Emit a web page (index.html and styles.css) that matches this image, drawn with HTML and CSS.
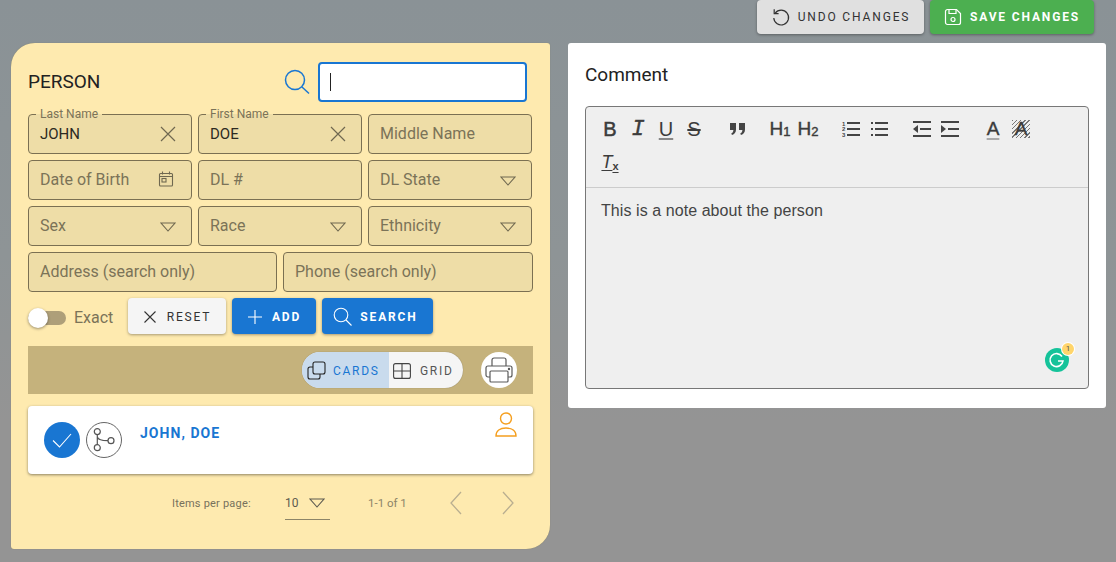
FILE: index.html
```html
<!DOCTYPE html>
<html lang="en">
<head>
    <meta charset="UTF-8">
    <meta name="viewport" content="width=device-width, initial-scale=1.0">
    <title>Person</title>
    <link rel="stylesheet" href="styles.css">
</head>
<body>
    <div class="topbar">
        <button class="btn btn-undo">
            <svg width="20" height="20" viewBox="0 0 20 20" fill="none" stroke="#333" stroke-width="1.2"><path d="M4.2 6.2A7.4 7.4 0 1 1 2.8 11"/><path d="M3.2 2.2v4.4h4.4"/></svg>
            UNDO CHANGES
        </button>
        <button class="btn btn-save">
            <svg width="18" height="18" viewBox="0 0 18 18" fill="none" stroke="#fff" stroke-width="1.2"><path d="M3.5 1.5h9l4 4v9a2 2 0 0 1-2 2h-11a2 2 0 0 1-2-2v-11a2 2 0 0 1 2-2z"/><path d="M5 1.5v4h7v-4"/><circle cx="9" cy="11.5" r="2"/></svg>
            SAVE CHANGES
        </button>
    </div>

    <div class="main">
        <div class="person">
            <div class="person-head">
                <h1>PERSON</h1>
                <svg class="head-search" width="26" height="26" viewBox="0 0 26 26" fill="none" stroke="#1976d2" stroke-width="1.5"><circle cx="11" cy="11" r="9.5"/><path d="M18 18l7 6.5"/></svg>
                <div class="head-input"><span class="caret"></span></div>
            </div>

            <div class="fields">
                <div class="field filled">
                    <span class="float-label">Last Name</span>
                    <span class="value">JOHN</span>
                    <svg class="field-icon" width="16" height="16" viewBox="0 0 16 16" fill="none" stroke="#6f6850" stroke-width="1.2"><path d="M1 1l14 14M15 1L1 15"/></svg>
                </div>
                <div class="field filled">
                    <span class="float-label">First Name</span>
                    <span class="value">DOE</span>
                    <svg class="field-icon" width="16" height="16" viewBox="0 0 16 16" fill="none" stroke="#6f6850" stroke-width="1.2"><path d="M1 1l14 14M15 1L1 15"/></svg>
                </div>
                <div class="field"><span class="hint">Middle Name</span></div>

                <div class="field">
                    <span class="hint">Date of Birth</span>
                    <svg class="field-icon icon-date" width="16" height="16" viewBox="0 0 16 16" fill="none" stroke="#6f6850" stroke-width="1.1"><rect x="1.5" y="2.5" width="13" height="12.5" rx="1"/><path d="M1.5 5.5h13M4.5 .5v3M11.500 .5v3"/><rect x="4" y="7.500" width="4" height="3.500"/></svg>
                </div>
                <div class="field"><span class="hint">DL #</span></div>
                <div class="field">
                    <span class="hint">DL State</span>
                    <svg class="field-icon caret-icon" width="16" height="10" viewBox="0 0 16 10" fill="none" stroke="#6f6850" stroke-width="1.1"><path d="M1 1h14L8 9z"/></svg>
                </div>

                <div class="field">
                    <span class="hint">Sex</span>
                    <svg class="field-icon caret-icon" width="16" height="10" viewBox="0 0 16 10" fill="none" stroke="#6f6850" stroke-width="1.1"><path d="M1 1h14L8 9z"/></svg>
                </div>
                <div class="field">
                    <span class="hint">Race</span>
                    <svg class="field-icon caret-icon" width="16" height="10" viewBox="0 0 16 10" fill="none" stroke="#6f6850" stroke-width="1.1"><path d="M1 1h14L8 9z"/></svg>
                </div>
                <div class="field">
                    <span class="hint">Ethnicity</span>
                    <svg class="field-icon caret-icon" width="16" height="10" viewBox="0 0 16 10" fill="none" stroke="#6f6850" stroke-width="1.1"><path d="M1 1h14L8 9z"/></svg>
                </div>
            </div>

            <div class="fields-two">
                <div class="field"><span class="hint">Address (search only)</span></div>
                <div class="field"><span class="hint">Phone (search only)</span></div>
            </div>

            <div class="actions">
                <div class="switch"><span class="knob"></span></div>
                <span class="exact">Exact</span>
                <button class="btn btn-reset">
                    <svg width="14" height="14" viewBox="0 0 14 14" fill="none" stroke="#333" stroke-width="1.1"><path d="M1.500 1.500l11 11M12.500 1.500l-11 11"/></svg>
                    RESET
                </button>
                <button class="btn btn-blue btn-add">
                    <svg width="16" height="16" viewBox="0 0 16 16" fill="none" stroke="#fff" stroke-width="1.1"><path d="M8 1v14M1 8h14"/></svg>
                    ADD
                </button>
                <button class="btn btn-blue btn-search">
                    <svg width="19" height="19" viewBox="0 0 19 19" fill="none" stroke="#fff" stroke-width="1.1"><circle cx="8" cy="8" r="6.800"/><path d="M13 13l5.500 5.500"/></svg>
                    SEARCH
                </button>
            </div>

            <div class="band">
                <div class="view-toggle">
                    <div class="view-opt view-on">
                        <svg width="19" height="19" viewBox="0 0 19 19" fill="none" stroke="#222" stroke-width="1.1"><rect x="6" y="1" width="12" height="12" rx="2"/><path d="M6 6H3a2 2 0 0 0-2 2v8a2 2 0 0 0 2 2h8a2 2 0 0 0 2-2v-3"/></svg>
                        CARDS
                    </div>
                    <div class="view-opt">
                        <svg width="18" height="16" viewBox="0 0 18 16" fill="none" stroke="#444" stroke-width="1.1"><rect x=".6" y=".6" width="16.800" height="14.800" rx="2"/><path d="M9 .6v14.800M.6 8h16.800"/></svg>
                        GRID
                    </div>
                </div>
                <div class="print">
                    <svg width="28" height="26" viewBox="0 0 28 26" fill="none" stroke="#5a5a5a" stroke-width="1.2"><path d="M7 9V3a2 2 0 0 1 2-2h10a2 2 0 0 1 2 2v6"/><path d="M5 20H3a2 2 0 0 1-2-2v-7a2 2 0 0 1 2-2h22a2 2 0 0 1 2 2v7a2 2 0 0 1-2 2h-2"/><rect x="5" y="14" width="18" height="11" rx="1"/><circle cx="24" cy="12" r=".6"/></svg>
                </div>
            </div>

            <div class="card">
                <div class="round round-check">
                    <svg width="20" height="15" viewBox="0 0 20 15" fill="none" stroke="#fff" stroke-width="1.1"><path d="M1 7.500l6.500 6.500L19 1"/></svg>
                </div>
                <div class="round round-branch">
                    <svg width="22" height="26" viewBox="0 0 22 26" fill="none" stroke="#555" stroke-width="1.2"><circle cx="4.300" cy="4.600" r="3"/><circle cx="4.300" cy="20.700" r="3"/><circle cx="18" cy="13.700" r="3"/><path d="M4.300 7.600v10.100M4.300 9.500c0 3 5 4.200 10.700 4.200"/></svg>
                </div>
                <span class="card-name">JOHN, DOE</span>
                <svg class="card-person" width="22" height="25" viewBox="0 0 22 25" fill="none" stroke="#f59f1f" stroke-width="1.4"><circle cx="11" cy="6.500" r="5.500"/><path d="M1 24c0-5 4-8 10-8s10 3 10 8z"/></svg>
            </div>

            <div class="pager">
                <span class="per-page">Items per page:</span>
                <div class="page-select">
                    <span>10</span>
                    <svg width="16" height="10" viewBox="0 0 16 10" fill="none" stroke="#5c5a50" stroke-width="1.1"><path d="M1 1h14L8 9z"/></svg>
                </div>
                <span class="range">1-1 of 1</span>
                <svg class="nav-prev" width="12" height="24" viewBox="0 0 12 24" fill="none" stroke="#b9ae90" stroke-width="1.3"><path d="M11 1L1 12l10 11"/></svg>
                <svg class="nav-next" width="12" height="24" viewBox="0 0 12 24" fill="none" stroke="#b9ae90" stroke-width="1.3"><path d="M1 1l10 11L1 23"/></svg>
            </div>
        </div>

        <div class="comment">
            <h2>Comment</h2>
            <div class="editor">
                <div class="toolbar">
                    <span class="tool tool-b">B</span>
                    <span class="tool tool-i">I</span>
                    <span class="tool tool-u">U</span>
                    <span class="tool tool-s">S</span>
                    <span class="tool gap">
                        <svg width="17" height="12" viewBox="0 0 17 12" fill="#444"><path d="M1 0h6v6.500C7 9.500 5.500 11 3 12l-.8-1.400C3.600 10 4.300 9 4.400 7H1zM10 0h6v6.500c0 3-1.500 4.500-4 5.500l-.8-1.400c1.400-.6 2.100-1.600 2.200-3.600H10z"/></svg>
                    </span>
                    <span class="tool tool-h gap">H<small>1</small></span>
                    <span class="tool tool-h">H<small>2</small></span>
                    <span class="tool gap">
                        <svg width="18" height="16" viewBox="0 0 18 16" fill="#444"><rect x="5" y="1" width="13" height="2"/><rect x="5" y="7" width="13" height="2"/><rect x="5" y="13" width="13" height="2"/><text class="ol-digit" x="0" y="4.800">1</text><text class="ol-digit" x="0" y="10.300">2</text><text class="ol-digit" x="0" y="15.800">3</text></svg>
                    </span>
                    <span class="tool">
                        <svg width="17" height="14" viewBox="0 0 17 14" fill="#444"><rect x="4" y="0" width="13" height="2"/><rect x="4" y="6" width="13" height="2"/><rect x="4" y="12" width="13" height="2"/><rect x="0" y="0" width="2" height="2"/><rect x="0" y="6" width="2" height="2"/><rect x="0" y="12" width="2" height="2"/></svg>
                    </span>
                    <span class="tool gap">
                        <svg width="18" height="16" viewBox="0 0 18 16" fill="#444"><rect x="0" y="0" width="18" height="2"/><rect x="0" y="14" width="18" height="2"/><rect x="7" y="7" width="11" height="2"/><path d="M5 4v8L0 8z"/></svg>
                    </span>
                    <span class="tool">
                        <svg width="18" height="16" viewBox="0 0 18 16" fill="#444"><rect x="0" y="0" width="18" height="2"/><rect x="0" y="14" width="18" height="2"/><rect x="7" y="7" width="11" height="2"/><path d="M0 4v8l5-4z"/></svg>
                    </span>
                    <span class="tool tool-color gap">A</span>
                    <span class="tool tool-back">A</span>
                    <span class="tool tool-clear">T<small>x</small></span>
                </div>
                <div class="editor-text">This is a note about the person</div>
                <div class="grammarly">
                    <svg width="24" height="24" viewBox="0 0 24 24"><circle cx="12" cy="12" r="12" fill="#15c39a"/><path d="M17 8.500A6.500 6.500 0 1 0 18 13h-5" fill="none" stroke="#fff" stroke-width="1.600"/></svg>
                    <span class="g-badge">1</span>
                </div>
            </div>
        </div>
    </div>
</body>
</html>
```

FILE: styles.css
```css
* {
    box-sizing: border-box;
}
html, body {
    margin: 0;
    height: 562px;
    overflow: hidden;
}
body {
    font-family: Roboto, sans-serif;
    background: linear-gradient(to bottom, #8a9296 0%, #8e9496 45%, #949494 75%);
}
.btn {
    display: flex;
    align-items: center;
    justify-content: center;
    border: none;
    border-radius: 4px;
    font-family: Roboto, sans-serif;
    font-size: 12px;
    letter-spacing: 1.850px;
    padding: 0;
    box-shadow: 0 1px 3px rgba(0, 0, 0, 0.35);
}

/* top buttons */
.topbar {
    display: flex;
    justify-content: flex-end;
    gap: 6px;
    height: 34px;
    padding-right: 22px;
    margin-bottom: 9px;
}
.btn-undo {
    width: 167px;
    gap: 7px;
    background-color: #e0e0e0;
    color: #333;
}
.btn-save {
    width: 164px;
    gap: 8px;
    background-color: #4caf50;
    color: #fff;
    font-weight: 700;
}

.main {
    display: flex;
    align-items: flex-start;
    gap: 18px;
    padding-left: 11px;
}

/* person panel */
.person {
    width: 539px;
    height: 506px;
    padding: 19px 17px 0;
    background-color: #feeaaf;
    border-radius: 24px 3px 24px 3px;
    box-shadow: 0 0 1px rgba(120, 110, 60, 0.6);
}
.person-head {
    display: flex;
    align-items: center;
    height: 40px;
    margin-bottom: 12px;
}
.person-head h1 {
    margin: 0 0 2px;
    font-size: 19px;
    font-weight: 400;
    color: #222;
    flex: 1;
}
.head-search {
    margin-right: 8px;
}
.head-input {
    display: flex;
    align-items: center;
    width: 209px;
    height: 40px;
    margin-right: 6px;
    padding-left: 10px;
    background-color: #fff;
    border: 2px solid #1976d2;
    border-radius: 4px;
}
.caret {
    width: 1px;
    height: 18px;
    background-color: #222;
}
.fields {
    display: grid;
    grid-template-columns: 164px 164px 164px;
    grid-auto-rows: 40px;
    gap: 6px;
}
.fields-two {
    display: grid;
    grid-template-columns: 249px 250px;
    height: 40px;
    gap: 6px;
    margin-top: 6px;
}
.field {
    position: relative;
    display: flex;
    align-items: center;
    padding: 0 0 2px 11px;
    background-color: #eedda7;
    border: 1px solid #7b7052;
    border-radius: 4px;
    font-size: 16px;
}
.field.filled {
    padding-bottom: 0;
}
.hint {
    color: #7b7358;
}
.value {
    color: #2c2a22;
    font-size: 15px;
}
.float-label {
    position: absolute;
    top: -7px;
    left: 7px;
    padding: 0 4px;
    font-size: 12px;
    line-height: 13px;
    color: #7b7358;
    background: linear-gradient(to bottom, #feeaaf 50%, #eedda7 50%);
}
.field-icon {
    position: absolute;
    top: 11px;
    right: 15px;
}
.icon-date {
    right: 17px;
    top: 10px;
}
.caret-icon {
    top: 15px;
    right: 15px;
}

/* actions */
.actions {
    display: flex;
    align-items: center;
    height: 36px;
    margin-top: 6px;
}
.switch {
    position: relative;
    width: 38px;
    height: 14px;
    margin-top: 3px;
    background-color: #ae9f79;
    border-radius: 7px;
}
.knob {
    position: absolute;
    top: -3px;
    left: 0;
    width: 20px;
    height: 20px;
    background-color: #fff;
    border-radius: 50%;
    box-shadow: 0 1px 3px rgba(0, 0, 0, 0.4);
}
.exact {
    width: 62px;
    padding: 3px 0 0 8px;
    font-size: 16px;
    color: #7b7358;
}
.actions .btn {
    height: 36px;
    margin-right: 6px;
    padding-top: 1px;
}
.btn-reset {
    width: 98px;
    gap: 10px;
    background-color: #f5f5f5;
    color: #333;
}
.btn-blue {
    background-color: #1976d2;
    color: #fff;
    font-weight: 700;
}
.btn-add {
    width: 84px;
    gap: 9px;
}
.actions .btn-search {
    width: 111px;
    gap: 8px;
    padding-right: 4px;
}

/* view band */
.band {
    display: flex;
    align-items: center;
    justify-content: flex-end;
    width: 505px;
    height: 48px;
    margin-top: 12px;
    padding-right: 16px;
    background-color: #c5b27c;
}
.view-toggle {
    display: flex;
    width: 161px;
    height: 36px;
    border-radius: 18px;
    overflow: hidden;
    margin-right: 18px;
    box-shadow: 0 0 1px rgba(0, 0, 0, 0.4);
    background-color: #f5f5f5;
}
.view-opt {
    display: flex;
    align-items: center;
    gap: 9px;
    padding: 1px 0 0 4px;
    font-size: 12px;
    letter-spacing: 1.700px;
    color: #555;
}
.view-opt.view-on {
    width: 87px;
    gap: 7px;
    padding-left: 5px;
    background-color: #c9dbed;
    color: #1976d2;
}
.print {
    display: flex;
    align-items: center;
    justify-content: center;
    width: 36px;
    height: 36px;
    background-color: #fff;
    border-radius: 50%;
}

/* card */
.card {
    position: relative;
    display: flex;
    align-items: flex-start;
    gap: 6px;
    width: 505px;
    height: 68px;
    margin-top: 12px;
    padding: 16px 0 0 16px;
    background-color: #fff;
    border-radius: 4px;
    box-shadow: 0 1px 3px rgba(0, 0, 0, 0.45);
}
.round {
    display: flex;
    align-items: center;
    justify-content: center;
    width: 36px;
    height: 36px;
    border-radius: 50%;
}
.round-check {
    background-color: #1976d2;
}
.round-branch {
    border: 1px solid #666;
}
.card-name {
    margin-left: 12px;
    font-size: 14px;
    font-weight: 700;
    line-height: 22px;
    letter-spacing: 1.050px;
    color: #1976d2;
}
.card-person {
    position: absolute;
    top: 6px;
    right: 16px;
}

/* pager */
.pager {
    display: flex;
    align-items: center;
    height: 36px;
    margin-top: 11px;
    padding-left: 144px;
    font-size: 11px;
    color: #77715c;
}
.per-page {
    width: 113px;
    letter-spacing: 0.200px;
}
.page-select {
    display: flex;
    align-items: center;
    justify-content: space-between;
    width: 45px;
    height: 34px;
    padding-right: 5px;
    border-bottom: 1px solid #8c8568;
    color: #5c5a50;
    font-size: 12px;
}
.range {
    width: 82px;
    margin-left: 38px;
    font-size: 11.500px;
    color: #8c8568;
}
.nav-next {
    margin-left: 40px;
}

/* comment panel */
.comment {
    width: 538px;
    height: 365px;
    padding: 19px 17px 0;
    background-color: #fff;
    border-radius: 3px;
}
.comment h2 {
    margin: 0 0 19px;
    font-size: 19px;
    line-height: 25px;
    font-weight: 400;
    color: #222;
}
.editor {
    position: relative;
    width: 504px;
    height: 283px;
    background-color: #efefef;
    border: 1px solid #777;
    border-radius: 4px;
}
.toolbar {
    display: flex;
    flex-wrap: wrap;
    height: 81px;
    padding: 5px 30px 0 10px;
    border-bottom: 1px solid #ccc;
}
.tool {
    display: flex;
    align-items: center;
    justify-content: center;
    width: 28px;
    height: 34px;
    font-family: "Liberation Sans", sans-serif;
    font-size: 20px;
    color: #3c3c3c;
}
.tool.gap {
    margin-left: 15px;
}
.tool-b {
    -webkit-text-stroke: 0.5px #3c3c3c;
}
.tool-i {
    font-family: "Liberation Mono", monospace;
    font-style: italic;
    font-size: 22px;
    -webkit-text-stroke: 0.4px #3c3c3c;
}
.tool-u {
    text-decoration: underline;
    text-decoration-color: #888;
    text-underline-offset: 2px;
}
.tool-s {
    text-decoration: line-through;
}
.tool-h {
    font-size: 19px;
    -webkit-text-stroke: 0.4px #3c3c3c;
}
.tool-h small {
    font-size: 13px;
    margin-top: 4px;
}
.ol-digit {
    font-family: "Liberation Sans", sans-serif;
    font-size: 6px;
    font-weight: 700;
}
.tool-color {
    text-decoration: underline;
    text-decoration-color: #aaa;
    text-decoration-thickness: 2px;
    text-underline-offset: 3px;
    font-size: 19px;
    -webkit-text-stroke: 0.4px #3c3c3c;
}
.tool-back {
    font-size: 19px;
    -webkit-text-stroke: 0.4px #3c3c3c;
    background-image: repeating-linear-gradient(135deg, #777 0 1px, transparent 1px 3px);
    background-size: 18px 18px;
    background-repeat: no-repeat;
    background-position: center;
}
.tool-clear {
    padding-bottom: 8px;
    font-style: italic;
    font-size: 18px;
    text-decoration: underline;
    text-underline-offset: 2px;
}
.tool-clear small {
    font-style: normal;
    font-weight: 700;
    font-size: 11px;
    margin-top: 6px;
    text-decoration: none;
}
.editor-text {
    padding: 13px 15px;
    font-family: "Liberation Sans", sans-serif;
    font-size: 16px;
    line-height: 20px;
    letter-spacing: 0.070px;
    color: #444;
}
.grammarly {
    position: absolute;
    right: 19px;
    bottom: 16px;
    width: 24px;
    height: 24px;
}
.g-badge {
    position: absolute;
    top: -5px;
    right: -5px;
    width: 12px;
    height: 12px;
    font-size: 8px;
    line-height: 12px;
    text-align: center;
    color: #555;
    background-color: #ffd56b;
    border-radius: 50%;
    box-shadow: 0 0 0 1px #fff;
}
```
